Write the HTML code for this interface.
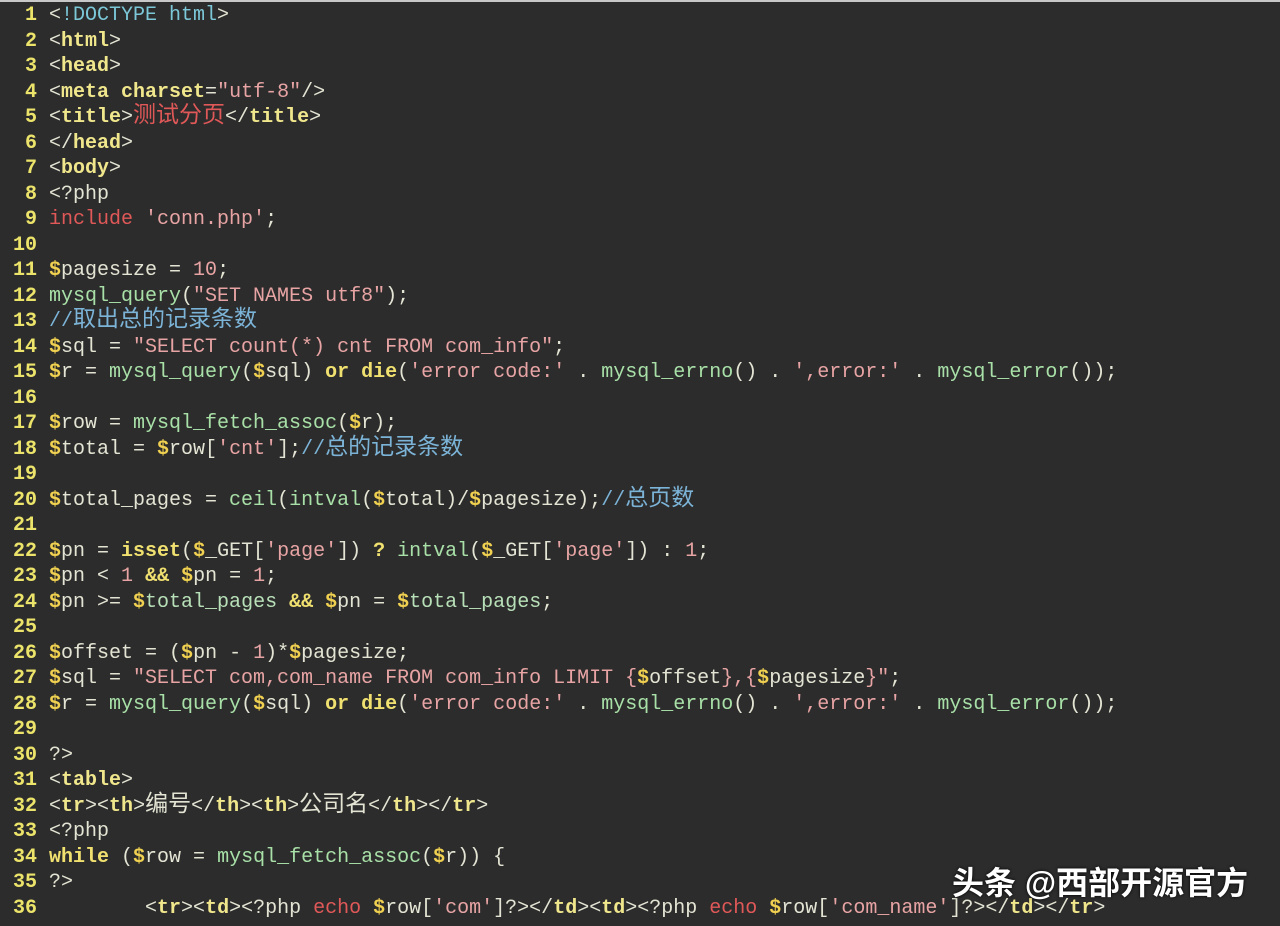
<!DOCTYPE html>
<html><head><meta charset="utf-8"><style>
html,body{margin:0;padding:0;background:#2c2c2c;width:1280px;height:926px;overflow:hidden}
.top{position:absolute;left:0;top:0;width:1280px;height:2px;background:#c8c8c8}
.w{position:absolute;left:0;top:3px;font-family:"Liberation Mono","Noto Sans CJK SC",monospace;font-size:20px;line-height:25.5px;color:#e4e4d4}
.l{display:block;height:25.5px;white-space:pre}
.n{display:inline-block;width:37px;text-align:right;margin-right:12px;color:#ece46a;font-weight:bold}
.t{color:#f0e68c;font-weight:bold}.k{color:#f0e070;font-weight:bold}
.s{color:#e8a4a4}.f{color:#a8e0a8}.c{color:#7cb4d8}.d{color:#f0d050;font-weight:bold}
.r{color:#e05858}.y{color:#7cc8d8}.v{color:#b8e0b8}
.z{font-size:23px;line-height:20px}
.wm{position:absolute;left:952px;top:858px;font-family:"Liberation Sans","Noto Sans CJK SC",sans-serif;font-size:32px;color:#fff;font-weight:bold;text-shadow:0 0 3px #000;white-space:nowrap}
</style></head><body><div class="top"></div><div class="w"><span class="l"><span class="n">1</span>&lt;<span class="y">!DOCTYPE html</span>&gt;</span><span class="l"><span class="n">2</span>&lt;<span class="t">html</span>&gt;</span><span class="l"><span class="n">3</span>&lt;<span class="t">head</span>&gt;</span><span class="l"><span class="n">4</span>&lt;<span class="t">meta charset</span>=<span class="s">"utf-8"</span>/&gt;</span><span class="l"><span class="n">5</span>&lt;<span class="t">title</span>&gt;<span class="r z">测试分页</span>&lt;/<span class="t">title</span>&gt;</span><span class="l"><span class="n">6</span>&lt;/<span class="t">head</span>&gt;</span><span class="l"><span class="n">7</span>&lt;<span class="t">body</span>&gt;</span><span class="l"><span class="n">8</span>&lt;?php</span><span class="l"><span class="n">9</span><span class="r">include</span> <span class="s">'conn.php'</span>;</span><span class="l"><span class="n">10</span></span><span class="l"><span class="n">11</span><span class="d">$</span>pagesize = <span class="s">10</span>;</span><span class="l"><span class="n">12</span><span class="f">mysql_query</span>(<span class="s">"SET NAMES utf8"</span>);</span><span class="l"><span class="n">13</span><span class="c">//<span class="z">取出总的记录条数</span></span></span><span class="l"><span class="n">14</span><span class="d">$</span>sql = <span class="s">"SELECT count(*) cnt FROM com_info"</span>;</span><span class="l"><span class="n">15</span><span class="d">$</span>r = <span class="f">mysql_query</span>(<span class="d">$</span>sql) <span class="k">or</span> <span class="k">die</span>(<span class="s">'error code:'</span> . <span class="f">mysql_errno</span>() . <span class="s">',error:'</span> . <span class="f">mysql_error</span>());</span><span class="l"><span class="n">16</span></span><span class="l"><span class="n">17</span><span class="d">$</span>row = <span class="f">mysql_fetch_assoc</span>(<span class="d">$</span>r);</span><span class="l"><span class="n">18</span><span class="d">$</span>total = <span class="d">$</span>row[<span class="s">'cnt'</span>];<span class="c">//<span class="z">总的记录条数</span></span></span><span class="l"><span class="n">19</span></span><span class="l"><span class="n">20</span><span class="d">$</span>total_pages = <span class="f">ceil</span>(<span class="f">intval</span>(<span class="d">$</span>total)/<span class="d">$</span>pagesize);<span class="c">//<span class="z">总页数</span></span></span><span class="l"><span class="n">21</span></span><span class="l"><span class="n">22</span><span class="d">$</span>pn = <span class="k">isset</span>(<span class="d">$</span>_GET[<span class="s">'page'</span>]) <span class="k">?</span> <span class="f">intval</span>(<span class="d">$</span>_GET[<span class="s">'page'</span>]) : <span class="s">1</span>;</span><span class="l"><span class="n">23</span><span class="d">$</span>pn &lt; <span class="s">1</span> <span class="k">&amp;&amp;</span> <span class="d">$</span>pn = <span class="s">1</span>;</span><span class="l"><span class="n">24</span><span class="d">$</span>pn &gt;= <span class="d">$</span><span class="v">total_pages</span> <span class="k">&amp;&amp;</span> <span class="d">$</span>pn = <span class="d">$</span><span class="v">total_pages</span>;</span><span class="l"><span class="n">25</span></span><span class="l"><span class="n">26</span><span class="d">$</span>offset = (<span class="d">$</span>pn - <span class="s">1</span>)*<span class="d">$</span>pagesize;</span><span class="l"><span class="n">27</span><span class="d">$</span>sql = <span class="s">"SELECT com,com_name FROM com_info LIMIT {</span><span class="d">$</span>offset<span class="s">},{</span><span class="d">$</span>pagesize<span class="s">}"</span>;</span><span class="l"><span class="n">28</span><span class="d">$</span>r = <span class="f">mysql_query</span>(<span class="d">$</span>sql) <span class="k">or</span> <span class="k">die</span>(<span class="s">'error code:'</span> . <span class="f">mysql_errno</span>() . <span class="s">',error:'</span> . <span class="f">mysql_error</span>());</span><span class="l"><span class="n">29</span></span><span class="l"><span class="n">30</span>?&gt;</span><span class="l"><span class="n">31</span>&lt;<span class="t">table</span>&gt;</span><span class="l"><span class="n">32</span>&lt;<span class="t">tr</span>&gt;&lt;<span class="t">th</span>&gt;<span class="z">编号</span>&lt;/<span class="t">th</span>&gt;&lt;<span class="t">th</span>&gt;<span class="z">公司名</span>&lt;/<span class="t">th</span>&gt;&lt;/<span class="t">tr</span>&gt;</span><span class="l"><span class="n">33</span>&lt;?php</span><span class="l"><span class="n">34</span><span class="k">while</span> (<span class="d">$</span>row = <span class="f">mysql_fetch_assoc</span>(<span class="d">$</span>r)) {</span><span class="l"><span class="n">35</span>?&gt;</span><span class="l"><span class="n">36</span>        &lt;<span class="t">tr</span>&gt;&lt;<span class="t">td</span>&gt;&lt;?php <span class="r">echo</span> <span class="d">$</span>row[<span class="s">'com'</span>]?&gt;&lt;/<span class="t">td</span>&gt;&lt;<span class="t">td</span>&gt;&lt;?php <span class="r">echo</span> <span class="d">$</span>row[<span class="s">'com_name'</span>]?&gt;&lt;/<span class="t">td</span>&gt;&lt;/<span class="t">tr</span>&gt;</span></div><div class="wm">头条 @西部开源官方</div></body></html>
